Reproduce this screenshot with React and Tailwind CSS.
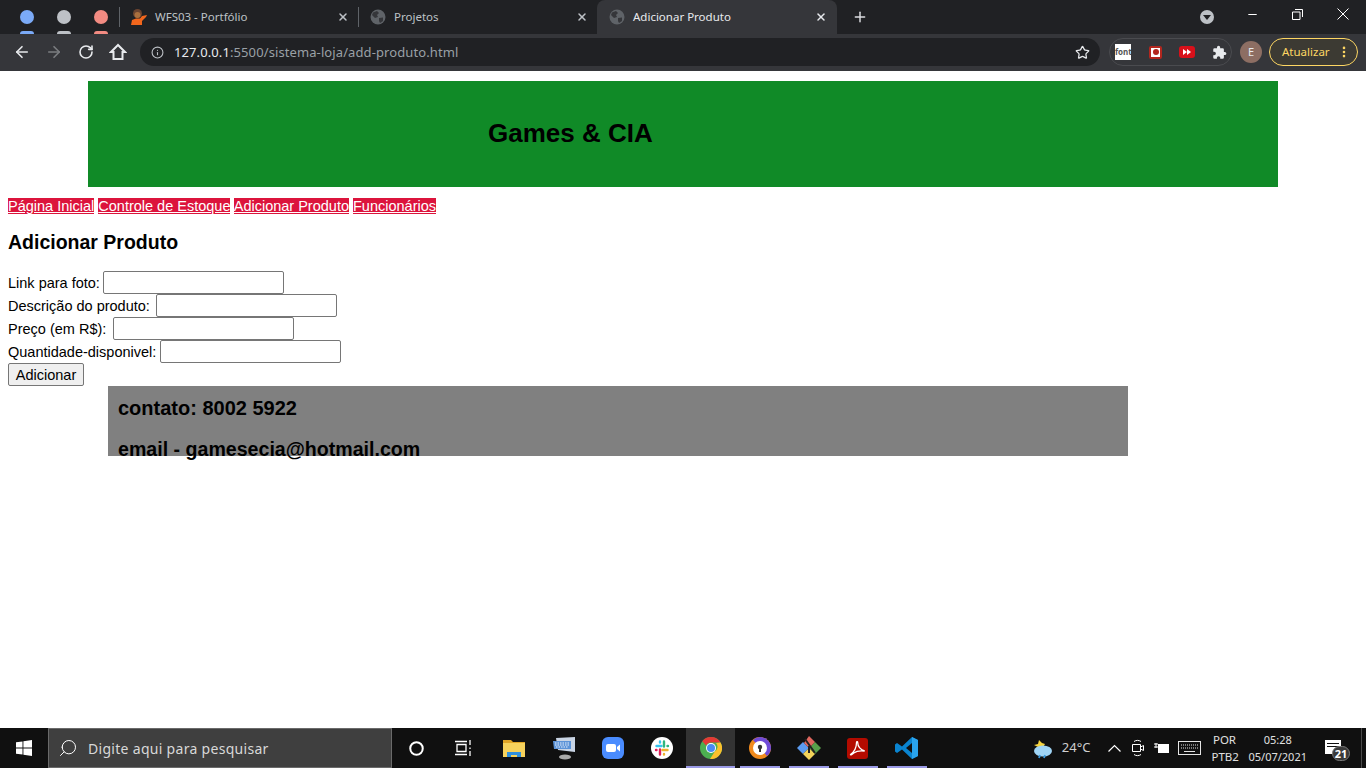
import React from 'react';
import { ArrowLeft, ArrowRight, RotateCw, Info, Star, X, Plus, Minus, Search, Circle, MoreVertical } from 'lucide-react';

const SANS = "font-['Noto_Sans','Open_Sans',sans-serif]";

function Globe() {
  return (
    <svg width="16" height="16" viewBox="0 0 16 16" className="shrink-0">
      <circle cx="8" cy="8" r="7.5" fill="#5f6368" />
      <path d="M3 3.5 L7 2 L9 4 L7 6 L8 8 L5 9 L2 6 Z M9 9 L13 8.5 L13 12 L10 14 L9 12 Z" fill="#35363a" />
    </svg>
  );
}

function Tab({ title, icon, active, width, sep }) {
  return (
    <div className={`flex items-center shrink-0 ${width} ${active ? 'bg-[#35363a] rounded-t-lg h-[37px] self-start pb-[3px]' : 'h-full'}`}>
      {sep && <div className="w-px h-[20px] bg-[#5f6368] mr-[11px]" />}
      {!sep && <div className="w-[12px]" />}
      <div className="flex items-center flex-1 min-w-0">
        {icon}
        <span className={`ml-[8px] text-[11.5px] ${active ? 'text-[#e8eaed]' : 'text-[#bdc1c6]'}`}>{title}</span>
        <X size={12} strokeWidth={3} className={`ml-auto ${active ? 'mr-[10px] text-[#e8eaed]' : 'mr-[9px] text-[#bdc1c6]'}`} />
      </div>
    </div>
  );
}

// bookmark-like dots, the row below is cut off by the toolbar
function Dot({ color }) {
  return (
    <div className="flex flex-col w-[14px] h-[34px] mr-[23px] pt-[10px]">
      <div className={`w-[14px] h-[14px] rounded-full ${color}`} />
      <div className={`w-[14px] h-[3px] mt-[7px] rounded-t-full ${color}`} />
    </div>
  );
}

function TabStrip() {
  return (
    <div className="flex h-[34px] bg-[#202124] shrink-0 relative overflow-visible z-10">
      <div className="flex pl-[20px] w-[119px] shrink-0">
        <Dot color="bg-[#7baaf7]" />
        <Dot color="bg-[#bdc1c6]" />
        <Dot color="bg-[#f28b82]" />
      </div>
      <Tab
        title="WFS03 - Portfólio"
        width="w-[239px]"
        sep
        icon={
          <svg width="16" height="16" viewBox="0 0 16 16" className="shrink-0">
            <path d="M0 16 L1 11 L5 9.500 L9 9.500 L11 7 L16 6 L15 8 L11 12 L11 16 Z" fill="#f2661c" />
            <circle cx="6.500" cy="4.500" r="4.500" fill="#6b4430" />
            <circle cx="6.500" cy="6" r="3" fill="#a9703f" />
          </svg>
        }
      />
      <Tab title="Projetos" width="w-[239px]" sep icon={<Globe />} />
      <Tab title="Adicionar Produto" width="w-[240px]" active icon={<Globe />} />
      <div className="flex items-center pl-[15px]">
        <Plus size={16} strokeWidth={2.2} className="text-[#dadce0]" />
      </div>
      <div className="flex items-center ml-auto">
        <div className="w-[14px] h-[14px] rounded-full bg-[#bdc1c6] flex items-center justify-center mr-[32px]">
          <div className="w-0 h-0 border-x-[4px] border-x-transparent border-t-[5px] border-t-[#202124] mt-[1px]" />
        </div>
        <Minus size={13} className="text-white mr-[33px] -mt-[6px]" />
        <svg width="11" height="11" viewBox="0 0 11 11" fill="none" stroke="#fff" className="mr-[34px] -mt-[6px]">
          <path d="M3 .5h7.5V8M.5 3h7.5v7.5H.5z" />
        </svg>
        <svg width="12" height="12" viewBox="0 0 12 12" stroke="#fff" className="mr-[17px] -mt-[6px]">
          <path d="M.5 .5l11 11M11.5 .5l-11 11" />
        </svg>
      </div>
    </div>
  );
}

function Toolbar() {
  return (
    <div className="flex items-center h-[37px] bg-[#35363a] shrink-0 pl-[13px] pr-[8px] pb-[1px]">
      <ArrowLeft size={18} strokeWidth={2.2} className="text-[#e8eaed]" />
      <ArrowRight size={18} strokeWidth={2.2} className="text-[#7b7d80] ml-[14px]" />
      <RotateCw size={16} strokeWidth={2.4} className="text-[#e8eaed] ml-[15px]" />
      <svg width="18" height="18" viewBox="0 0 18 18" fill="none" stroke="#e8eaed" strokeWidth="2" className="ml-[15px]">
        <path d="M9 2L2 9h2.500v7h9V9H16z" strokeLinejoin="miter" />
      </svg>
      <div className="flex items-center w-[960px] h-[28px] ml-[13px] rounded-full bg-[#202124]">
        <Info size={13} className="text-[#bdc1c6] ml-[11px]" />
        <span className="ml-[10px] mt-[1px] text-[13px] tracking-[0.1px] text-[#e8eaed]">
          127.0.0.1<span className="text-[#9aa0a6]">:5500/sistema-loja/add-produto.html</span>
        </span>
        <Star size={15} className="text-[#e8eaed] ml-auto mr-[10px]" />
      </div>
      <div className="flex items-center w-[123px] h-[28px] ml-[9px] rounded-full border border-[#4a4b4f]">
        <div className="w-[16px] h-[16px] ml-[5px] bg-white text-[8px] leading-[16px] text-center text-[#555] font-bold overflow-hidden">font</div>
        <div className="w-[13px] h-[13px] ml-[18px] rounded-[2px] border-[2px] border-[#b3261e] bg-white flex items-center justify-center">
          <div className="w-[6px] h-[6px] rounded-full bg-[#b3261e]" />
        </div>
        <div className="w-[16px] h-[12px] ml-[17px] rounded-[3px] bg-[#d8101a] flex items-center justify-center">
          <div className="w-0 h-0 border-y-[3px] border-y-transparent border-l-[4px] border-l-white" />
          <div className="w-0 h-0 border-y-[3px] border-y-transparent border-l-[4px] border-l-white" />
        </div>
        <svg width="15" height="15" viewBox="0 0 24 24" fill="#e8eaed" className="ml-[17px]">
          <path d="M20.5 11H19V7a2 2 0 0 0-2-2h-4V3.5a2.5 2.5 0 0 0-5 0V5H4a2 2 0 0 0-2 2v3.8h1.5a2.7 2.7 0 0 1 0 5.4H2V20a2 2 0 0 0 2 2h3.8v-1.5a2.7 2.7 0 0 1 5.4 0V22H17a2 2 0 0 0 2-2v-4h1.5a2.5 2.5 0 0 0 0-5z" />
        </svg>
      </div>
      <div className="w-[22px] h-[22px] ml-[8px] rounded-full bg-[#8d6e63] text-[#e8eaed] text-[11px] leading-[22px] text-center">E</div>
      <div className="flex items-center w-[89px] h-[28px] ml-[7px] rounded-full border border-[#fdd663] bg-[#3c3a33] pl-[12px]">
        <span className="text-[11.5px] text-[#fdd663]">Atualizar</span>
        <MoreVertical size={14} strokeWidth={2.5} className="text-[#fdd663] ml-auto mr-[6px]" />
      </div>
    </div>
  );
}

function Field({ label, labelWidth }) {
  return (
    <div className="h-[23px] flex items-center">
      <label className={`pt-[2px] whitespace-nowrap ${labelWidth}`}>{label}</label>
      <input type="text" className="w-[181px] h-[23px] bg-white rounded-[2px] border border-[#767676]" />
    </div>
  );
}

function Page() {
  return (
    <div className="flex-1 min-h-0 bg-white text-black text-[14.5px] leading-[17px] font-['Liberation_Sans',Arial,sans-serif] overflow-hidden pt-[10px]">
      <header className="mx-[88px] w-[1190px] h-[106px] bg-[#108a27] flex items-center pl-[400px] pb-[2px]">
        <h1 className="text-[26px] font-bold">Games &amp; CIA</h1>
      </header>
      <div className="px-[8px] mt-[11px]">
        <nav className="h-[17px] whitespace-nowrap">
          <a href="#" className="bg-[#dc143c] text-white underline">Página Inicial</a>{' '}
          <a href="#" className="bg-[#dc143c] text-white underline">Controle de Estoque</a>{' '}
          <a href="#" className="bg-[#dc143c] text-white underline">Adicionar Produto</a>{' '}
          <a href="#" className="bg-[#dc143c] text-white underline">Funcionários</a>
        </nav>
        <h2 className="text-[19.5px] leading-[22px] font-bold mt-[16px]">Adicionar Produto</h2>
        <form className="mt-[18px]">
          <Field label="Link para foto:" labelWidth="w-[95px]" />
          <Field label="Descrição do produto:" labelWidth="w-[148px]" />
          <Field label="Preço (em R$):" labelWidth="w-[105px]" />
          <Field label="Quantidade-disponivel:" labelWidth="w-[152px]" />
          <button type="button" className="block w-[76px] h-[23px] pt-[2px] bg-[#efefef] border border-[#767676] rounded-[2px]">Adicionar</button>
        </form>
      </div>
      <footer className="ml-[108px] w-[1020px] h-[70px] bg-[#808080] pl-[10px] pt-[11px]">
        <p className="text-[20px] leading-[22px] font-bold">contato: 8002 5922</p>
        <p className="text-[19.6px] leading-[22px] font-bold mt-[19px]">email - gamesecia@hotmail.com</p>
      </footer>
    </div>
  );
}

const APP_ICONS = [
  {
    key: 'explorer',
    svg: (
      <svg width="22" height="20" viewBox="0 0 22 20">
        <path d="M0 2h8l2 2h12v15H0z" fill="#e0a526" />
        <rect y="5" width="22" height="14" fill="#f6d25c" />
        <path d="M4 19v-5h14v5h-4v-2H8v2z" fill="#2f8fdc" />
      </svg>
    ),
  },
  {
    key: 'remote',
    svg: (
      <svg width="24" height="24" viewBox="0 0 24 24">
        <ellipse cx="13" cy="21" rx="6" ry="2.5" fill="#aaa" />
        <path d="M4 2L23 1v15L6 14z" fill="#c9d4e4" />
        <path d="M1 5h18v8H2z" fill="#5b93d8" />
        <path d="M3 7h14M3 9h14M4 11h12" stroke="#e6eefb" strokeDasharray="1.5 1" />
      </svg>
    ),
  },
  {
    key: 'zoom',
    svg: (
      <svg width="22" height="22" viewBox="0 0 22 22">
        <rect width="22" height="22" rx="6" fill="#4a8cff" />
        <rect x="4" y="7" width="10" height="8" rx="2" fill="#fff" />
        <path d="M15 10l3-2.5v7L15 12z" fill="#fff" />
      </svg>
    ),
  },
  {
    key: 'slack',
    svg: (
      <svg width="22" height="22" viewBox="0 0 22 22" strokeWidth="2.400" strokeLinecap="round">
        <circle cx="11" cy="11" r="11" fill="#fff" />
        <path d="M5.500 9h5M9 4.500v1" stroke="#36c5f0" />
        <path d="M13 4.500v5M17 9h-.5" stroke="#2eb67d" />
        <path d="M9 12.500v5M5 13h.5" stroke="#e01e5a" />
        <path d="M11.500 13h5M13 17.500v-.5" stroke="#ecb22e" />
      </svg>
    ),
  },
  {
    key: 'chrome',
    active: true,
    underline: true,
    svg: (
      <svg width="22" height="22" viewBox="0 0 22 22">
        <circle cx="11" cy="11" r="11" fill="#4caf50" />
        <path d="M11 0a11 11 0 0 1 9.5 5.5H11a5.5 5.5 0 0 0-5 3L2.3 4.200A11 11 0 0 1 11 0z" fill="#e53935" />
        <path d="M20.500 5.500A11 11 0 0 1 10 22l4.800-7.500A5.500 5.500 0 0 0 16 6z" fill="#fbc02d" />
        <circle cx="11" cy="11" r="5" fill="#fff" />
        <circle cx="11" cy="11" r="4" fill="#4a8af4" />
      </svg>
    ),
  },
  {
    key: 'avast',
    underline: true,
    svg: (
      <svg width="22" height="22" viewBox="0 0 22 22">
        <circle cx="11" cy="11" r="11" fill="#f08a1d" />
        <path d="M11 0a11 11 0 0 1 11 11 11 11 0 0 1-4 8L11 11 4 3a11 11 0 0 1 7-3z" fill="#6f4bd8" />
        <circle cx="11" cy="11" r="7" fill="#fff" />
        <circle cx="11" cy="10" r="2.200" fill="#333" />
        <rect x="10" y="10" width="2" height="5" fill="#333" />
      </svg>
    ),
  },
  {
    key: 'git',
    underline: true,
    svg: (
      <svg width="24" height="24" viewBox="0 0 24 24">
        <path d="M12 12L6 6l-6 6 6 6z" fill="#5b9bf0" />
        <path d="M12 12l6-6 6 6-6 6z" fill="#57a04a" />
        <path d="M12 12l-5-5 5-7 6 6z" fill="#e0675f" />
        <path d="M12 12l-6 6 6 6 6-6z" fill="#f2d35a" />
        <path d="M8 3l10 14M12 10v7" stroke="#222" strokeWidth="2" />
      </svg>
    ),
  },
  {
    key: 'acrobat',
    underline: true,
    svg: (
      <svg width="21" height="21" viewBox="0 0 21 21" fill="none">
        <rect width="21" height="21" rx="3" fill="#b30b00" />
        <path d="M3.500 16.500C7 14 9.500 9 9.500 4.500c0-1 1.200-1 1.200 0 0 4 3 7.500 7 8.500-4-.5-9 .5-11 2-1.500 1.500-3.200 2.500-3.200 1.500z" stroke="#fff" strokeWidth="1.300" />
      </svg>
    ),
  },
  {
    key: 'vscode',
    underline: true,
    svg: (
      <svg width="24" height="24" viewBox="0 0 24 24">
        <path d="M17 1l6 3v16l-6 3-10-9.500L2 17l-2-1.500v-7L2 7l5 3.500z" fill="#0a84d0" />
        <path d="M17 7l-6 5 6 5z" fill="#101010" />
        <path d="M17 1l6 3v16l-6 3z" fill="#2aa4ee" />
      </svg>
    ),
  },
];

function Taskbar() {
  return (
    <div className={`flex items-center h-[40px] bg-[#101010] shrink-0 ${SANS}`}>
      <div className="w-[48px] flex justify-center">
        <svg width="16" height="16" viewBox="0 0 16 16" fill="#fff">
          <path d="M0 2.300L6.500 1.400V7.500H0zM7.400 1.300L16 0V7.500H7.400zM0 8.500H6.500V14.600L0 13.700zM7.400 8.500H16V16L7.400 14.700z" />
        </svg>
      </div>
      <div className="flex items-center w-[344px] h-[40px] bg-[#3f3f3f] border border-[#6a6a6a] pl-[9px]">
        <Search size={20} strokeWidth={1.2} className="text-white -scale-x-100" />
        <span className="ml-[10px] text-[14px] tracking-[0.3px] text-[#d8d8d8]">Digite aqui para pesquisar</span>
      </div>
      <div className="w-[49px] flex justify-center">
        <Circle size={15} strokeWidth={3.2} className="text-white" />
      </div>
      <div className="w-[45px] flex justify-center">
        <svg width="18" height="16" viewBox="0 0 18 16" fill="none" stroke="#fff" strokeWidth="1.300">
          <path d="M0 1.500h12M0 14.500h12M2 4.500h9v7H2zM15 0v5M15 7.500v1.500M15 11v5" />
        </svg>
      </div>
      <div className="flex ml-[4px]">
        {APP_ICONS.map((app) => (
          <div key={app.key} className={`flex flex-col items-center w-[49px] h-[40px] ${app.active ? 'bg-[#333333]' : ''}`}>
            <div className={`flex-1 flex items-center justify-center pt-[2px] ${app.key === 'explorer' ? 'pr-[2px]' : ''}`}>{app.svg}</div>
            <div className={`h-[2px] ${app.underline ? 'bg-[#9a9ae6]' : ''} ${app.active ? 'w-full' : 'w-[40px]'}`} />
          </div>
        ))}
      </div>
      <div className="flex items-center ml-auto text-[#dcdcdc]">
        <svg width="22" height="22" viewBox="0 0 22 22" className="mr-[9px]">
          <path d="M3 8l4-1 1-4 3 3 3 1-3 5z" fill="#f5d33f" />
          <ellipse cx="12" cy="14" rx="9" ry="5.500" fill="#9fd4f5" />
          <path d="M9 18l-1 3M14 18l-1 3" stroke="#3a9be0" strokeWidth="1.800" />
        </svg>
        <span className="text-[13px] text-[#cfcfcf]">24°C</span>
        <svg width="17" height="17" viewBox="0 0 17 17" fill="none" stroke="#fff" strokeWidth="1.200" className="ml-[16px]">
          <path d="M2.500 11.500L8.500 5.500l6 6" />
        </svg>
        <svg width="14" height="18" viewBox="0 0 14 18" fill="none" stroke="#fff" className="ml-[8px]">
          <path d="M3 2.500c2-1.500 5-1.500 7 0M3 15.500c2 1.500 5 1.500 7 0M1.500 5.500h8v7h-8zM9.500 8l3-1.500v5l-3-1.500" />
        </svg>
        <svg width="16" height="12" viewBox="0 0 16 12" className="ml-[9px]">
          <rect x="4" y="2" width="11" height="9" fill="#fff" />
          <path d="M0 2h4M0 5h4M2 1v5" stroke="#fff" />
        </svg>
        <svg width="23" height="14" viewBox="0 0 23 14" fill="none" stroke="#e5e5e5" className="ml-[8px]">
          <rect x=".5" y=".5" width="22" height="13" />
          <path d="M3 4h17M3 7h17" strokeDasharray="1 1" />
          <path d="M6 10.500h11" />
        </svg>
        <div className="w-[26px] ml-[10px] mr-[11px] text-[11.5px] leading-[17px] text-center text-[#e0e0e0]">
          <div>POR</div>
          <div>PTB2</div>
        </div>
        <div className="text-[11px] leading-[17px] text-center text-[#e0e0e0]">
          <div>05:28</div>
          <div>05/07/2021</div>
        </div>
        <div className="relative w-[16px] h-[14px] ml-[18px] mr-[6px] -mt-[2px] bg-white">
          <div className="mt-[3px] mx-[2px] h-[1px] bg-[#101010]" />
          <div className="mt-[2px] mx-[2px] h-[1px] bg-[#101010]" />
          <div className="absolute -right-[9px] top-[6px] w-[18px] h-[15px] rounded-full bg-[#3a3a3a] border border-[#777] text-white text-[11px] font-bold leading-[13px] text-center">21</div>
        </div>
        <div className="w-px h-[40px] bg-[#4a4a4a] ml-[14px] mr-[4px]" />
      </div>
    </div>
  );
}

export default function App() {
  return (
    <div className="flex flex-col h-screen overflow-hidden">
      <div className={SANS}>
        <TabStrip />
        <Toolbar />
      </div>
      <Page />
      <Taskbar />
    </div>
  );
}
